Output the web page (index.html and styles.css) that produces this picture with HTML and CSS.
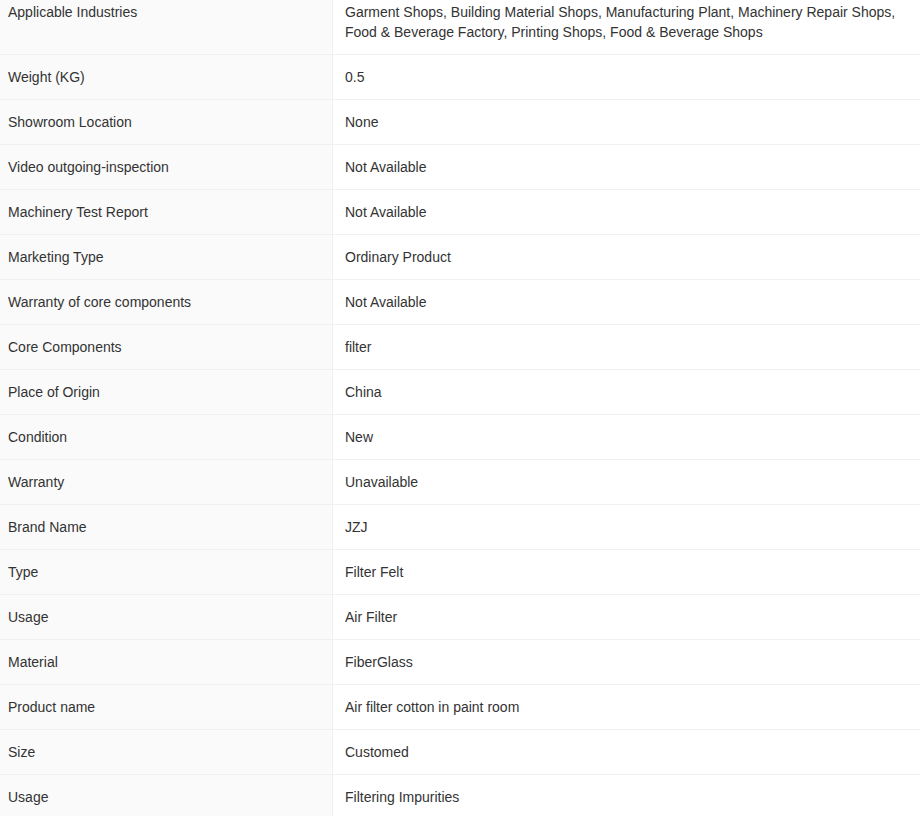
FILE: index.html
```html
<!DOCTYPE html>
<html lang="en">
<head>
    <meta charset="UTF-8">
    <title>Product Attributes</title>
    <link rel="stylesheet" href="styles.css">
</head>
<body>
    <div class="attr-panel">
        <table class="attr-table">
            <tbody>
                <tr>
                    <th>Applicable Industries</th>
                    <td>Garment Shops, Building Material Shops, Manufacturing Plant, Machinery Repair Shops, Food &amp; Beverage Factory, Printing Shops, Food &amp; Beverage Shops</td>
                </tr>
                <tr><th>Weight (KG)</th><td>0.5</td></tr>
                <tr><th>Showroom Location</th><td>None</td></tr>
                <tr><th>Video outgoing-inspection</th><td>Not Available</td></tr>
                <tr><th>Machinery Test Report</th><td>Not Available</td></tr>
                <tr><th>Marketing Type</th><td>Ordinary Product</td></tr>
                <tr><th>Warranty of core components</th><td>Not Available</td></tr>
                <tr><th>Core Components</th><td>filter</td></tr>
                <tr><th>Place of Origin</th><td>China</td></tr>
                <tr><th>Condition</th><td>New</td></tr>
                <tr><th>Warranty</th><td>Unavailable</td></tr>
                <tr><th>Brand Name</th><td>JZJ</td></tr>
                <tr><th>Type</th><td>Filter Felt</td></tr>
                <tr><th>Usage</th><td>Air Filter</td></tr>
                <tr><th>Material</th><td>FiberGlass</td></tr>
                <tr><th>Product name</th><td>Air filter cotton in paint room</td></tr>
                <tr><th>Size</th><td>Customed</td></tr>
                <tr><th>Usage</th><td>Filtering Impurities</td></tr>
            </tbody>
        </table>
    </div>
</body>
</html>
```

FILE: styles.css
```css
* {
    margin: 0;
    padding: 0;
    box-sizing: border-box;
}

body {
    background-color: #fff;
    font-family: 'Liberation Sans', Arial, sans-serif;
    font-size: 14px;
    color: #333;
    overflow: hidden;
}

/* page is scrolled a little, first row top is cut off */
.attr-panel {
    margin-top: -10px;
}

.attr-table {
    width: 100%;
    table-layout: fixed;
    border-collapse: separate;
    border-spacing: 0;
}

.attr-table th,
.attr-table td {
    padding: 12px 12px;
    line-height: 20px;
    font-weight: normal;
    text-align: left;
    vertical-align: top;
    border-bottom: 1px solid #f0f0f0;
}

.attr-table th {
    width: 333px;
    padding-left: 8px;
    background-color: #fafafa;
    border-right: 1px solid #f0f0f0;
}
```
